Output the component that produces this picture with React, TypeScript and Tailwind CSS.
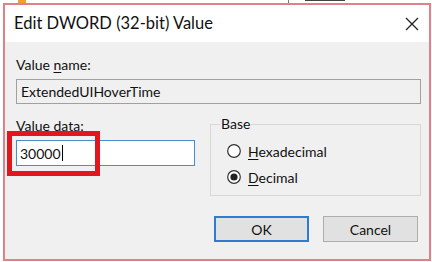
import React from "react";

const font = { fontFamily: 'Lato, "Noto Sans", Arial, sans-serif' };

function Radio({ checked }: { checked?: boolean }) {
  return (
    <svg width="14" height="14" viewBox="0 0 14 14" className="shrink-0">
      <circle cx="7" cy="7" r="6.3" fill="#fff" stroke="#333" strokeWidth="1.2" />
      {checked && <circle cx="7" cy="7" r="3.6" fill="#222" />}
    </svg>
  );
}

export default function App() {
  return (
    <div className="relative w-[432px] h-[262px] bg-white overflow-hidden" style={font}>
      {/* background fragments */}
      <div className="absolute left-[18px] top-0 w-[8px] h-[3px] bg-[#f0a030]" />
      <div className="absolute left-[288px] top-0 w-[1px] h-[3px] bg-[#777]" />
      <div className="absolute left-[305px] top-0 w-[40px] h-[1px] bg-[#444]" />

      <div className="ml-[3px] mt-[3px] w-[428px] h-[258px] border-2 border-[#e0808a] flex flex-col">
        {/* title bar */}
        <div className="h-[37px] bg-white flex items-center justify-between pl-[9px] pr-[10px] shrink-0">
          <span className="text-[16.5px] text-[#111]">Edit DWORD (32-bit) Value</span>
          <svg width="14" height="14" viewBox="0 0 14 14">
            <path d="M1 1 L13 13 M13 1 L1 13" stroke="#222" strokeWidth="1.3" />
          </svg>
        </div>
        {/* body */}
        <div className="flex-1 bg-[#f0f0f0] pl-[11px] pr-[8px] pt-[13px] text-[14px] text-[#111]">
          <div className="leading-[20px]">
            Value <span className="underline underline-offset-2">n</span>ame:
          </div>
          <div className="mt-[4px] h-[25px] w-[405px] border border-[#a0a0a0] bg-[#f0f0f0] flex items-center pl-[4px]">
            ExtendedUIHoverTime
          </div>
          <div className="flex mt-[10px]">
            <div className="w-[179px]">
              <div className="leading-[20px] mt-[2px]">Value data:</div>
              <div className="mt-[4px] h-[26px] w-[179px] border border-[#4a8ccf] bg-white flex items-center pl-[3px]">
                30000<span className="inline-block w-[1px] h-[16px] bg-black ml-[1px]" />
              </div>
            </div>
            <div className="ml-[15px] mt-[10px] w-[211px] h-[72px] border border-[#d8d8d8] relative">
              <span className="absolute -top-[11px] left-[9px] bg-[#f0f0f0] px-[1px] leading-[20px]">Base</span>
              <div className="flex flex-col gap-[6px] pt-[16px] pl-[16px]">
                <div className="flex items-center gap-[7px] h-[20px]">
                  <Radio />
                  <span><span className="underline underline-offset-2">H</span>exadecimal</span>
                </div>
                <div className="flex items-center gap-[7px] h-[20px]">
                  <Radio checked />
                  <span><span className="underline underline-offset-2">D</span>ecimal</span>
                </div>
              </div>
            </div>
          </div>
          <div className="flex justify-end gap-[14px] mt-[20px] pr-[3px]">
            <div className="w-[95px] h-[26px] border-2 border-[#2e7bcf] bg-[#e1e1e1] flex items-center justify-center">OK</div>
            <div className="w-[95px] h-[26px] border border-[#adadad] bg-[#e1e1e1] flex items-center justify-center">Cancel</div>
          </div>
        </div>
      </div>

      {/* red annotation box */}
      <div className="absolute left-[7px] top-[131px] w-[93px] h-[45px] border-[5px] border-[#e3161f]" />
    </div>
  );
}
